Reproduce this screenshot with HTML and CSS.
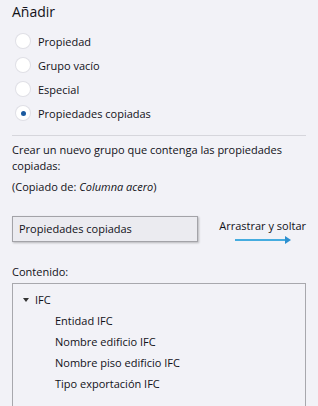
FILE: index.html
```html
<!DOCTYPE html>
<html lang="es">
<head>
    <meta charset="UTF-8">
    <meta name="viewport" content="width=device-width, initial-scale=1.0">
    <title>Añadir</title>
    <link rel="stylesheet" href="styles.css">
</head>
<body>
    <div class="panel">
        <h1 class="title">Añadir</h1>

        <!-- Options -->
        <div class="options">
            <label class="option"><span class="radio"></span>Propiedad</label>
            <label class="option"><span class="radio"></span>Grupo vacío</label>
            <label class="option"><span class="radio"></span>Especial</label>
            <label class="option"><span class="radio checked"></span>Propiedades copiadas</label>
        </div>

        <hr class="separator">

        <p class="desc">Crear un nuevo grupo que contenga las propiedades copiadas:</p>
        <p class="source">(Copiado de: <em>Columna acero</em>)</p>

        <div class="drag-row">
            <div class="name-box">Propiedades copiadas</div>
            <div class="drag-hint">
                <span>Arrastrar y soltar</span>
                <svg class="arrow" width="56" height="8" viewBox="0 0 56 8">
                    <line x1="0" y1="4" x2="51" y2="4" stroke="#45acdf" stroke-width="2"/>
                    <polygon points="50,0 56,4 50,8" fill="#2d8fcf"/>
                </svg>
            </div>
        </div>

        <p class="label">Contenido:</p>
        <div class="tree">
            <div class="node"><span class="caret"></span>IFC</div>
            <div class="leaf">Entidad IFC</div>
            <div class="leaf">Nombre edificio IFC</div>
            <div class="leaf">Nombre piso edificio IFC</div>
            <div class="leaf">Tipo exportación IFC</div>
        </div>
    </div>
</body>
</html>
```

FILE: styles.css
```css
body {
    margin: 0;
    background-color: #f2f2f7;
    font-family: "Open Sans", "Noto Sans", sans-serif;
    font-size: 11px;
    font-weight: 500;
    color: #111118;
}

.panel {
    padding: 3px 12px 0 12px;
    height: 403px;
    overflow: hidden;
}

.title {
    font-size: 14px;
    font-weight: 500;
    margin: 0 0 12px 0;
    line-height: 18px;
}

.options {
    display: flex;
    flex-direction: column;
    gap: 8px;
    padding-left: 4px;
}

.option {
    display: flex;
    align-items: center;
    gap: 8px;
    height: 16px;
}

.radio {
    width: 14px;
    height: 14px;
    border-radius: 50%;
    background-color: #fff;
    box-shadow: 0 0 0 1px #e0e0e6;
    display: flex;
    align-items: center;
    justify-content: center;
}

.radio.checked::after {
    content: "";
    width: 5px;
    height: 5px;
    border-radius: 50%;
    background-color: #1a5aa0;
}

.separator {
    border: none;
    border-top: 1px solid #d6d6dc;
    margin: 14px 0 0 0;
}

.desc {
    margin: 6px 0 0 0;
    line-height: 16px;
}

.source {
    margin: 5px 0 0 0;
    line-height: 16px;
}

.drag-row {
    display: flex;
    align-items: flex-start;
    margin-top: 21px;
}

.name-box {
    width: 180px;
    height: 24px;
    line-height: 24px;
    padding-left: 6px;
    border: 1px solid #a3a3a8;
    background-color: #ebebf0;
    box-shadow: 1px 1px 2px rgba(0, 0, 0, 0.25);
}

.drag-hint {
    display: flex;
    flex-direction: column;
    align-items: center;
    margin-left: 21px;
    margin-top: 2px;
    line-height: 16px;
    white-space: nowrap;
}

.arrow {
    margin-top: 2px;
}

.label {
    margin: 20px 0 0 0;
    line-height: 16px;
}

.tree {
    margin-top: 3px;
    border: 1px solid #a8a8ad;
    height: 140px;
    padding-top: 5px;
    box-sizing: border-box;
}

.node, .leaf {
    height: 21px;
    line-height: 21px;
}

.node {
    display: flex;
    align-items: center;
    padding-left: 10px;
}

.caret {
    width: 0;
    height: 0;
    border-left: 3px solid transparent;
    border-right: 3px solid transparent;
    border-top: 4px solid #333;
    margin-right: 6px;
}

.leaf {
    padding-left: 42px;
}
```
